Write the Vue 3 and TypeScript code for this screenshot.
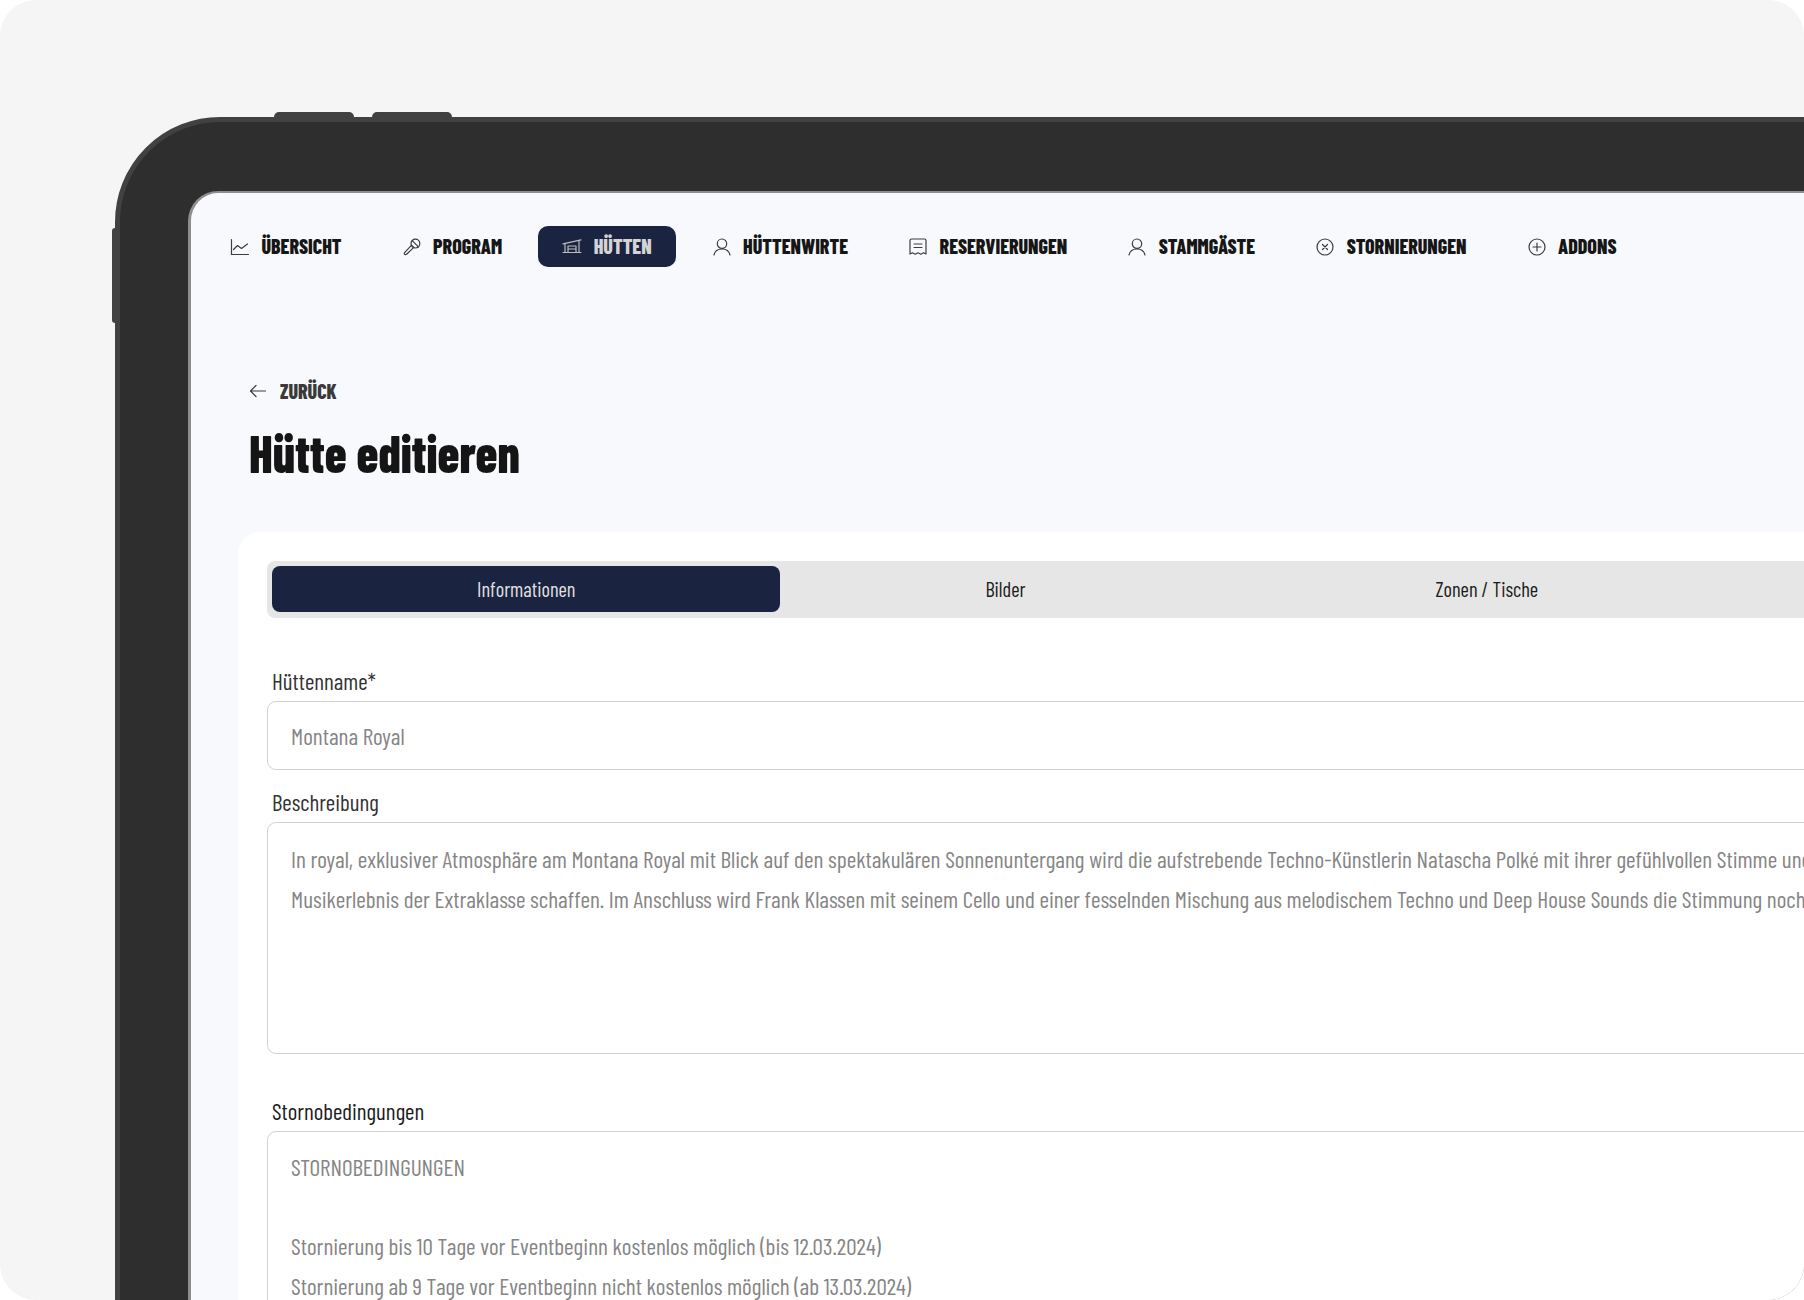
<template>
  <div class="frame">
    <div class="device">
      <span class="hw-btn top first"></span>
      <span class="hw-btn top second"></span>
      <span class="hw-btn side"></span>

      <div class="screen">
        <!-- Top navigation -->
        <nav class="nav">
          <a v-for="item in navItems" :key="item.label" class="nav-item" :class="{ active: item.active }">
            <svg class="nav-icon" viewBox="0 0 20 20" fill="none" stroke="currentColor" stroke-width="1.2" stroke-linecap="round" stroke-linejoin="round">
              <template v-if="item.icon === 'chart'">
                <path d="M1.5 2.5V17.5H18.5" />
                <path d="M3.5 12.5 7.5 8.5 11.5 11.5 17.5 7" />
              </template>
              <template v-else-if="item.icon === 'mic'">
                <circle cx="13.4" cy="6.6" r="4.4" />
                <path d="M10.2 3.6 16.4 9.8" />
                <path d="M9.6 8.2 11.8 10.4 4.6 17.2C4 17.8 3.2 17.8 2.7 17.3 2.2 16.8 2.2 16 2.8 15.4Z" />
              </template>
              <template v-else-if="item.icon === 'garage'">
                <path d="M1 6.8 19 2.8" />
                <path d="M3 6.5V15.5M17 3.5V15.5" />
                <path d="M6 9H14V15.5H6ZM6 12H14" />
                <path d="M1 15.5H19" />
              </template>
              <template v-else-if="item.icon === 'user'">
                <circle cx="10" cy="6.7" r="4.7" />
                <path d="M2 18C2.8 14.4 5.8 12 10 12S17.2 14.4 18 18" />
              </template>
              <template v-else-if="item.icon === 'receipt'">
                <path d="M2 3.5C2 2.7 2.7 2 3.5 2H16.5C17.3 2 18 2.7 18 3.5V17L15.5 15.8 12.8 17.2 10 15.8 7.2 17.2 4.5 15.8 2 17Z" />
                <path d="M6 7H14M6 10.5H14" />
              </template>
              <template v-else-if="item.icon === 'cancel'">
                <circle cx="10" cy="10" r="8" />
                <path d="M7.5 7.5 12.5 12.5M12.5 7.5 7.5 12.5" />
              </template>
              <template v-else>
                <circle cx="10" cy="10" r="8" />
                <path d="M10 6V14M6 10H14" />
              </template>
            </svg>
            <span class="nav-label">{{ item.label }}</span>
          </a>
        </nav>

        <main class="content">
          <a class="back">
            <svg class="back-icon" viewBox="0 0 18 14" fill="none" stroke="currentColor" stroke-width="1.2" stroke-linecap="round" stroke-linejoin="round">
              <path d="M16.5 7H1.5M7 1.5 1.5 7 7 12.5" />
            </svg>
            <span>ZURÜCK</span>
          </a>
          <h1 class="title">Hütte editieren</h1>

          <section class="card">
            <div class="tabs">
              <button v-for="tab in tabs" :key="tab" class="tab" :class="{ active: tab === activeTab }">{{ tab }}</button>
            </div>

            <div class="field name-field">
              <label>Hüttenname*</label>
              <div class="box single">Montana Royal</div>
            </div>

            <div class="field desc-field">
              <label>Beschreibung</label>
              <div class="box multi">
                <p v-for="line in description" :key="line">{{ line }}</p>
              </div>
            </div>

            <div class="field">
              <label class="dark">Stornobedingungen</label>
              <div class="box multi tall">
                <p v-for="(line, i) in storno" :key="i">{{ line || "\u00a0" }}</p>
              </div>
            </div>
          </section>
        </main>
      </div>
    </div>
  </div>
</template>

<script setup lang="ts">
const navItems = [
  { label: "ÜBERSICHT", icon: "chart" },
  { label: "PROGRAM", icon: "mic" },
  { label: "HÜTTEN", icon: "garage", active: true },
  { label: "HÜTTENWIRTE", icon: "user" },
  { label: "RESERVIERUNGEN", icon: "receipt" },
  { label: "STAMMGÄSTE", icon: "user" },
  { label: "STORNIERUNGEN", icon: "cancel" },
  { label: "ADDONS", icon: "plus" },
];

const tabs = ["Informationen", "Bilder", "Zonen / Tische"];
const activeTab = "Informationen";

const description = [
  "In royal, exklusiver Atmosphäre am Montana Royal mit Blick auf den spektakulären Sonnenuntergang wird die aufstrebende Techno-Künstlerin Natascha Polké mit ihrer gefühlvollen Stimme und",
  "Musikerlebnis der Extraklasse schaffen. Im Anschluss wird Frank Klassen mit seinem Cello und einer fesselnden Mischung aus melodischem Techno und Deep House Sounds die Stimmung noch",
];

const storno = [
  "STORNOBEDINGUNGEN",
  "",
  "Stornierung bis 10 Tage vor Eventbeginn kostenlos möglich (bis 12.03.2024)",
  "Stornierung ab 9 Tage vor Eventbeginn nicht kostenlos möglich (ab 13.03.2024)",
];
</script>

<style>
html,
body {
  background: #ffffff;
}
</style>

<style scoped>
.frame {
  width: 1804px;
  height: 1300px;
  box-sizing: border-box;
  padding: 117px 0 0 115px;
  background: #f5f5f5;
  border-radius: 36px;
  overflow: hidden;
  font-family: "Barlow Condensed", "Roboto Condensed", Roboto, sans-serif;
}

.device {
  position: relative;
  width: 1900px;
  height: 1400px;
  box-sizing: border-box;
  padding: 69px 0 0 68px;
  background: #2e2e2e;
  border: 5px solid #414141;
  border-radius: 105px 0 0 0;
}

.hw-btn {
  position: absolute;
  background: #414141;
}

.hw-btn.top {
  top: -10px;
  width: 80px;
  height: 6px;
  border-radius: 5px 5px 0 0;
}

.hw-btn.first {
  left: 154px;
}

.hw-btn.second {
  left: 252px;
}

.hw-btn.side {
  left: -8px;
  top: 106px;
  width: 4px;
  height: 95px;
  border-radius: 3px 0 0 3px;
}

.screen {
  height: 100%;
  box-sizing: border-box;
  padding-top: 33px;
  background: #f8f9fd;
  border-top: 2px solid #8e8e8e;
  border-left: 3px solid #8e8e8e;
  border-radius: 30px 0 0 0;
}

.nav {
  display: flex;
  gap: 12px;
  padding-left: 15px;
}

.nav-item {
  display: flex;
  align-items: center;
  gap: 11.5px;
  height: 41px;
  padding: 0 24px;
  border-radius: 10px;
  color: #161616;
  font-size: 20px;
  font-weight: 800;
  white-space: nowrap;
}

.nav-label {
  margin-bottom: 2px;
}

.nav-item .nav-icon {
  color: #3c3c3c;
}

.nav-item.active {
  background: #1a2340;
  color: #d4d4d4;
}

.nav-item.active .nav-icon {
  color: #bdbdbd;
}

.nav-icon {
  width: 20px;
  height: 20px;
  flex: none;
}

.content {
  padding: 0 0 0 58px;
}

.back {
  display: flex;
  align-items: center;
  gap: 13px;
  margin-top: 111px;
  height: 26px;
  color: #3a3a3a;
  font-size: 20px;
  font-weight: 800;
}

.back-icon {
  width: 18px;
  height: 14px;
  flex: none;
}

.title {
  margin: 18px 0 0;
  color: #151515;
  font-size: 54px;
  font-weight: 800;
  line-height: 60px;
  transform: scaleX(0.912);
  transform-origin: left center;
}

.card {
  margin: 50px 0 0 -11px;
  padding: 29px;
  background: #ffffff;
  border-radius: 22px 0 0 0;
}

.tabs {
  display: flex;
  box-sizing: border-box;
  width: 1600px;
  height: 57px;
  margin-bottom: 51px;
  padding: 5px 6px 6px 5px;
  background: #e6e6e6;
  border-radius: 8px;
}

.tab {
  padding: 0 205px;
  border: 0;
  border-radius: 8px;
  background: transparent;
  color: #1c1c1c;
  font: 400 20.4px "Barlow Condensed", "Roboto Condensed", Roboto, sans-serif;
  white-space: nowrap;
}

.tab.active {
  background: #1a2340;
  color: #e0e0e0;
}

.field label {
  display: block;
  height: 24px;
  margin: 0 0 8px 5px;
  color: #333333;
  font-size: 23px;
  font-weight: 400;
  line-height: 24px;
}

.field label.dark {
  color: #1c1c1c;
}

.name-field {
  margin-bottom: 20px;
}

.desc-field {
  margin-bottom: 45px;
}

.box {
  box-sizing: border-box;
  width: 1600px;
  padding: 0 23px;
  border: 1.5px solid #d2d2d2;
  border-radius: 9px;
  color: #858585;
  font-size: 23.3px;
  font-weight: 400;
  overflow: hidden;
  white-space: nowrap;
}

.box p {
  margin: 0;
  line-height: 39.5px;
}

.single {
  height: 69px;
  line-height: 69px;
}

.multi {
  height: 232px;
  padding-top: 17px;
}

.tall {
  height: 300px;
  padding-top: 16px;
}
</style>
